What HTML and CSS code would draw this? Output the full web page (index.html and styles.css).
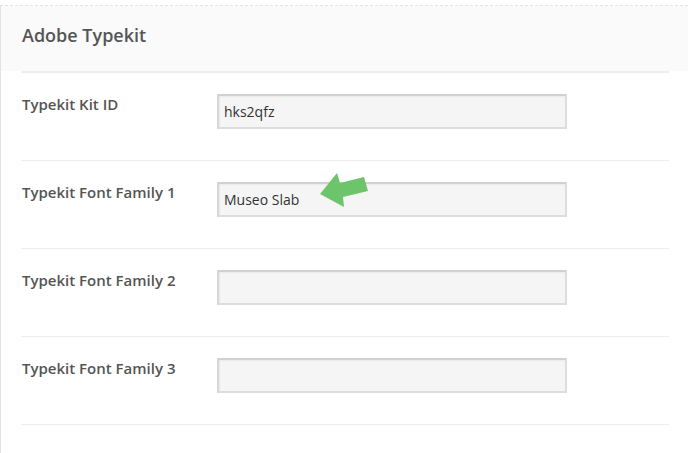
FILE: index.html
```html
<!DOCTYPE html>
<html>
<head>
<meta charset="utf-8">
<link rel="stylesheet" href="styles.css">
</head>
<body>
<div class="panel">
  <div class="panel-head"><h2 class="title">Adobe Typekit</h2></div>
  <div class="rows">
    <div class="row">
      <div class="label">Typekit Kit ID</div>
      <div class="field"><input class="input" type="text" value="hks2qfz"></div>
    </div>
    <div class="row">
      <div class="label">Typekit Font Family 1</div>
      <div class="field">
        <input class="input" type="text" value="Museo Slab">
        <svg class="arrow" width="60" height="40" viewBox="0 0 60 40"><polygon points="2,23 19,2 22,12 46,6 50,20 25,26 26,36" fill="#6cc56a"/></svg>
      </div>
    </div>
    <div class="row">
      <div class="label">Typekit Font Family 2</div>
      <div class="field"><input class="input" type="text" value=""></div>
    </div>
    <div class="row">
      <div class="label">Typekit Font Family 3</div>
      <div class="field"><input class="input" type="text" value=""></div>
    </div>
  </div>
</div>
</body>
</html>
```
FILE: styles.css
```css
html, body { margin: 0; padding: 0; background: #fff; }
body { font-family: "Open Sans", "Liberation Sans", sans-serif; padding-top: 5px; overflow: hidden; }
.panel {
  border-top: 1px dashed #e3e3e3;
  border-left: 1px solid #e3e3e3;
  height: 460px;
}
.panel-head {
  background: #fafafa;
  height: 65px;
  padding: 0 21px;
  display: flex;
  align-items: center;
}
.title {
  margin: 0;
  font-size: 18px;
  font-weight: 600;
  color: #555;
  line-height: 24px;
  position: relative;
  top: -4px;
}
.rows { margin: 0 19px 0 20px; border-top: 2px solid #eee; }
.row {
  display: flex;
  height: 87px;
  border-bottom: 1px solid #eee;
  box-sizing: content-box;
}
.label {
  width: 195px;
  padding-top: 19px;
  padding-left: 1px;
  font-size: 15px;
  font-weight: 600;
  color: #555;
  line-height: 24px;
}
.field { padding-top: 21px; position: relative; }
.input {
  box-sizing: border-box;
  width: 350px;
  height: 35px;
  margin: 0;
  padding: 0 5px;
  border: 2px solid #ddd;
  border-top-color: #d0d0d0;
  border-left-color: #d6d6d6;
  background: #f5f5f5;
  box-shadow: inset 1px 1px 2px rgba(0,0,0,0.05);
  font-family: "Open Sans", "Liberation Sans", sans-serif;
  font-size: 14px;
  color: #333;
  outline: none;
}
.arrow { position: absolute; left: 101px; top: 10px; }
```
